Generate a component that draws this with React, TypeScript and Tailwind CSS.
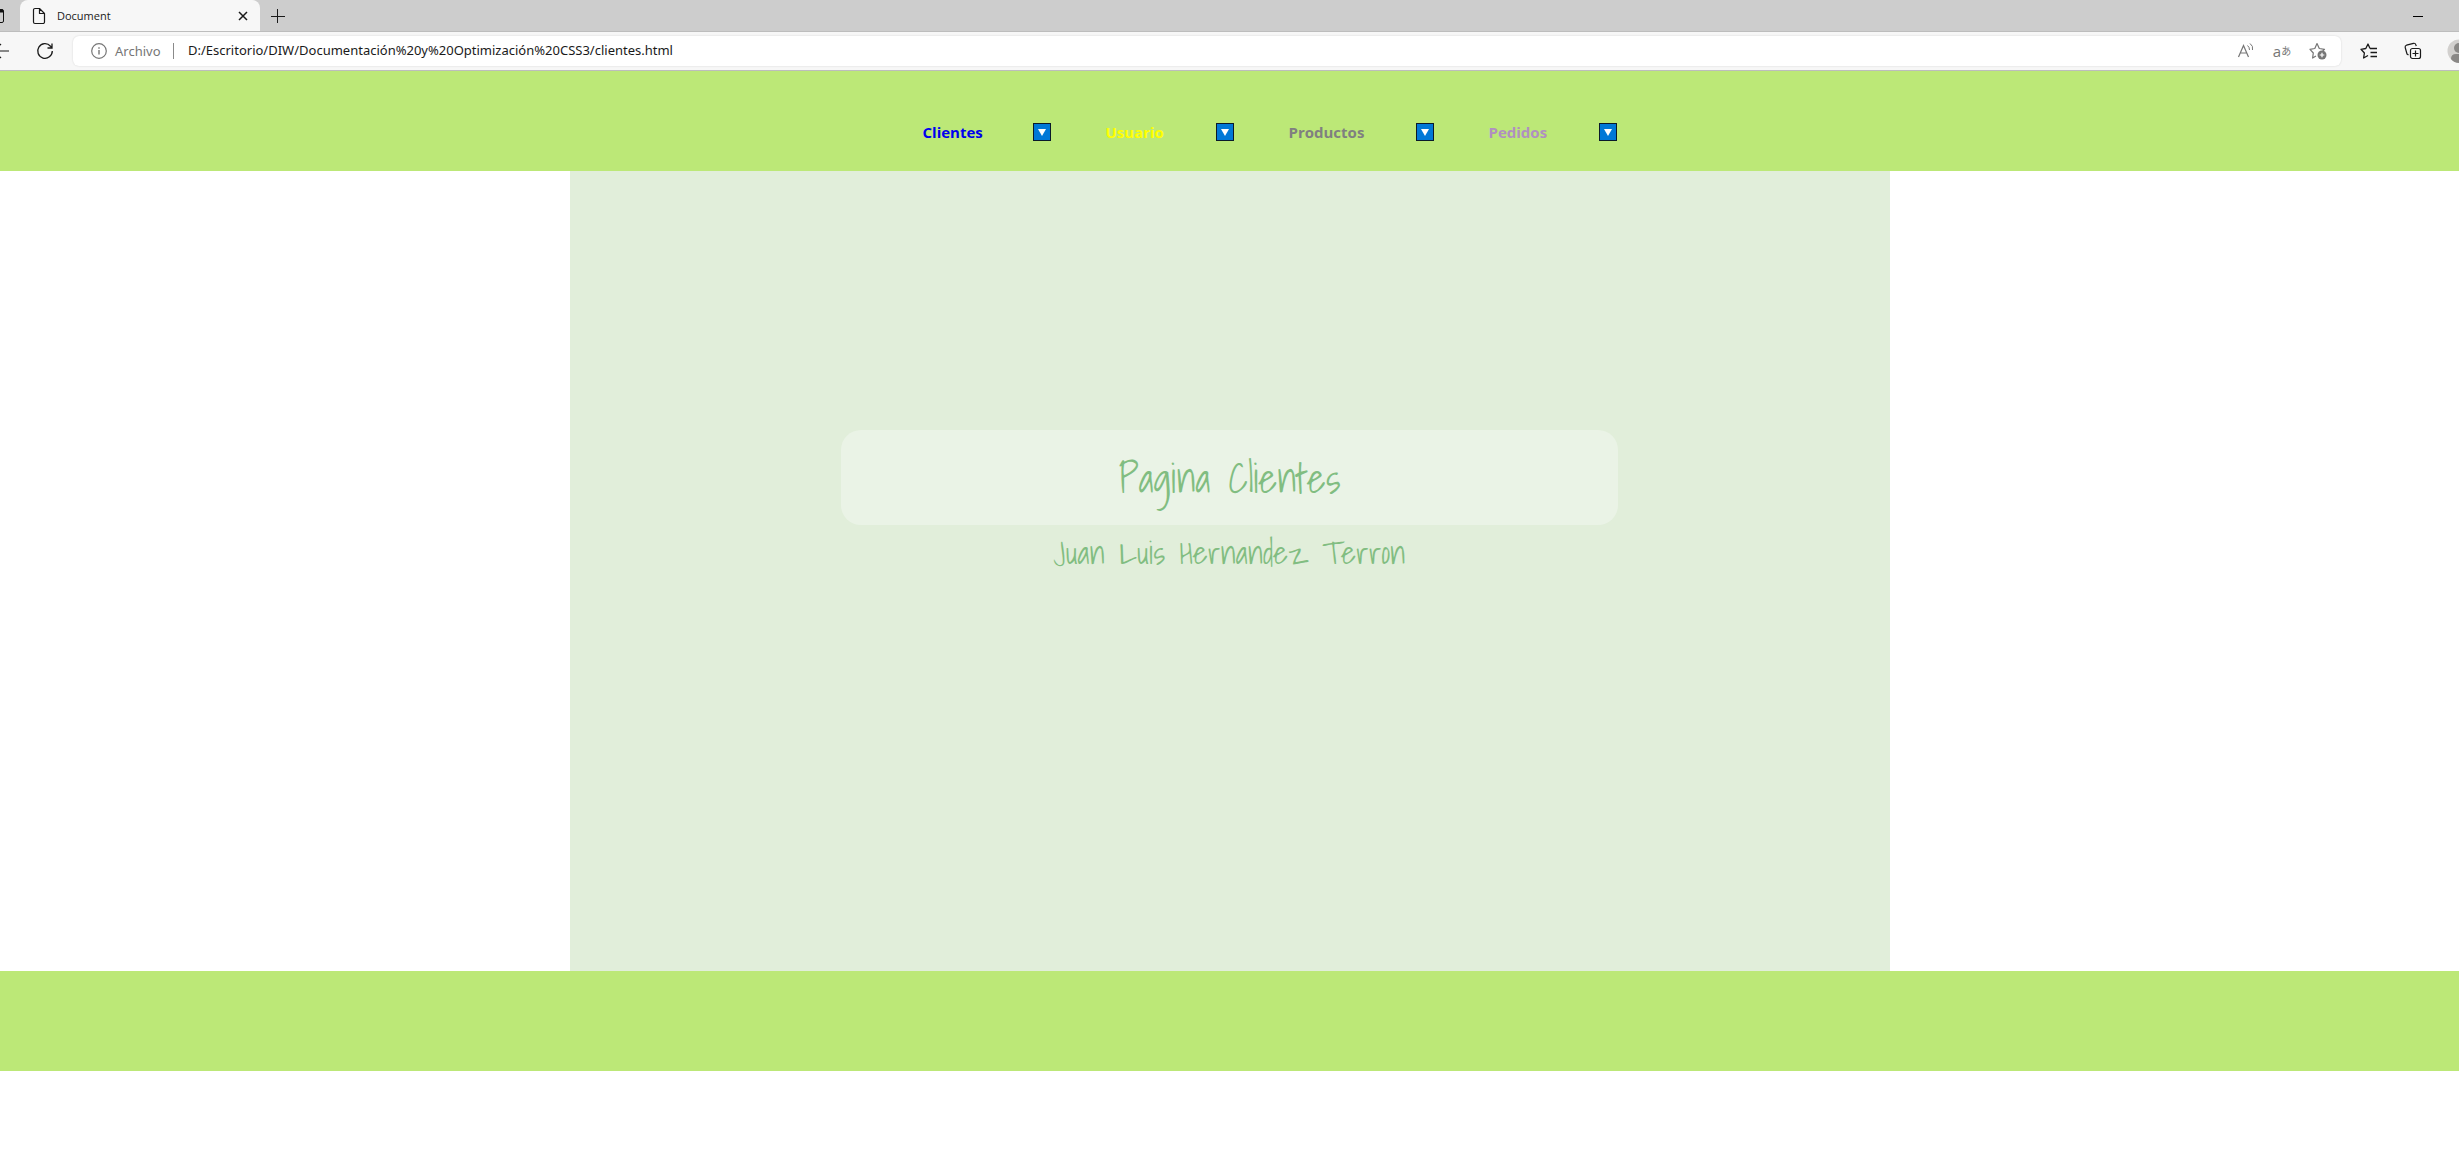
import React from "react";

const navItems = [
  { label: "Clientes", style: "w-[110px] text-[#0000ee]" },
  { label: "Usuario", style: "w-[110px] text-[#ffff00]" },
  { label: "Productos", style: "w-[127px] text-[#808080]" },
  { label: "Pedidos", style: "w-[110px] text-[#b090c0]" },
];

function TabStrip() {
  return (
    <div className="flex h-8 items-stretch overflow-hidden border-b border-[#bdbdbd] bg-[#cdcdcd]">
      <button aria-label="Acciones de pestañas" className="w-5 shrink-0">
        <svg width="20" height="31" viewBox="0 0 20 31" fill="none" stroke="#111">
          <path d="M-8 9.500h10a1.500 1.500 0 0 1 1.500 1.500v10a1.500 1.500 0 0 1-1.500 1.500h-10" />
          <path d="M-8 11H3" strokeWidth="3" />
        </svg>
      </button>
      <div className="-mb-px flex w-60 shrink-0 items-center rounded-t-lg bg-[#f7f7f7] px-3">
        <svg width="14" height="18" viewBox="0 0 14 18" fill="none" stroke="#1a1a1a" strokeWidth="1.200" strokeLinejoin="round">
          <path d="M3 1.500h4.500l5 5v8.500a1.500 1.500 0 0 1-1.500 1.500H3A1.500 1.500 0 0 1 1.500 15V3A1.500 1.500 0 0 1 3 1.500zM7.500 1.500v5h5" />
        </svg>
        <span className="ml-[11px] flex-1 text-[11px]">Document</span>
        <button aria-label="Cerrar pestaña" className="flex w-[10px] items-center justify-center">
          <svg width="10" height="10" viewBox="0 0 10 10" stroke="#1a1a1a" strokeWidth="1.500">
            <path d="M1 1l8 8M9 1l-8 8" />
          </svg>
        </button>
      </div>
      <button aria-label="Nueva pestaña" className="ml-2 flex w-5 items-center justify-center">
        <svg width="14" height="14" viewBox="0 0 14 14" stroke="#1a1a1a" strokeWidth="1">
          <path d="M0 7.500h14M6.500 0v14" />
        </svg>
      </button>
      <button aria-label="Minimizar" className="mr-9 ml-auto flex items-center">
        <svg width="10" height="10" viewBox="0 0 10 10" stroke="#000">
          <path d="M0 5.500h10" />
        </svg>
      </button>
    </div>
  );
}

function Toolbar() {
  return (
    <div className="flex h-[39px] items-center overflow-hidden border-b border-[#bdbdbd] bg-[#f7f7f7]">
      <button aria-label="Atrás" className="w-9 shrink-0">
        <svg width="12" height="18" viewBox="0 0 12 18" fill="none" stroke="#1a1a1a" strokeWidth="1.200">
          <path d="M-6 9H9M-6 9l7 -7M-6 9l7 7" />
        </svg>
      </button>
      <button aria-label="Actualizar" className="shrink-0">
        <svg width="18" height="18" viewBox="0 0 18 18" fill="none" stroke="#1a1a1a" strokeWidth="1.300">
          <path d="M16.300 9A7.300 7.300 0 1 1 14.500 4.200L16 6M16 1.500V6h-4.500" />
        </svg>
      </button>
      <div className="ml-[19px] flex h-[30px] flex-1 items-center rounded-md bg-white pr-[14px] pl-[18px] shadow-[0_0_2px_rgba(0,0,0,0.15)]">
        <svg width="16" height="16" viewBox="0 0 16 16" fill="none" stroke="#767676" strokeWidth="1.200">
          <circle cx="8" cy="8" r="7.300" />
          <path d="M8 7v4.500M8 4.300v1.400" strokeWidth="1.400" />
        </svg>
        <label htmlFor="url" className="ml-2 w-[59px] border-r border-[#8a8a8a] font-['Noto_Sans'] text-[13px] leading-4 text-[#767676]">
          Archivo
        </label>
        <input
          id="url"
          className="ml-3.5 min-w-0 flex-1 bg-transparent font-['Noto_Sans'] text-[13px] text-[#1a1a1a] outline-none"
          defaultValue="D:/Escritorio/DIW/Documentación%20y%20Optimización%20CSS3/clientes.html"
        />
        <div className="flex items-center gap-[18px] text-[#767676]">
          <button aria-label="Leer en voz alta">
            <svg width="18" height="18" viewBox="0 0 18 18" fill="none" stroke="currentColor" strokeWidth="1.200">
              <path d="M1.500 15L6.500 3.500l5 11.500M3.300 11h6.500" />
              <path d="M10.500 3.500q2 1.500 2 4.500M13 1.500q3.500 2.500 2.500 6.500" strokeWidth="1" />
            </svg>
          </button>
          <button aria-label="Traducir" className="flex h-5 w-[18px] items-center justify-center text-[15px] leading-5 whitespace-nowrap">
            a<span className="text-[10px]">あ</span>
          </button>
          <button aria-label="Agregar a favoritos">
            <svg width="18" height="18" viewBox="0 0 18 18" fill="none" stroke="currentColor" strokeWidth="1.200" strokeLinejoin="round">
              <path d="M7 14L3.600 16l.7-5L1 7.300l4.800-.8L8 1.500l2.300 5 5.200.8-1.800 1.700" />
              <circle cx="13" cy="13" r="4.500" fill="currentColor" stroke="none" />
              <path d="M13 10.700v4.600M10.700 13h4.600" stroke="#fff" />
            </svg>
          </button>
        </div>
      </div>
      <div className="ml-[19px] flex shrink-0 items-center">
        <button aria-label="Favoritos">
          <svg width="18" height="18" viewBox="0 0 18 18" fill="none" stroke="#1a1a1a" strokeWidth="1.300" strokeLinejoin="round">
            <path d="M8 13.500L3.600 16l.8-5L1 7.300l4.800-.8L8 2l2 4.500M10 6.500h7M10.500 10.500H17M10.500 14.500H17" />
          </svg>
        </button>
        <button aria-label="Colecciones" className="ml-[26px]">
          <svg width="18" height="18" viewBox="0 0 18 18" fill="none" stroke="#1a1a1a" strokeWidth="1.200" strokeLinejoin="round">
            <rect x="6.500" y="6.500" width="10" height="10" rx="2" />
            <path d="M11.500 8.500v6M8.500 11.500h6M4.500 13L3 12 1.200 5.500a2 2 0 0 1 1.300-2.300l7-1.900a2 2 0 0 1 2.300 1.400L12.300 4" />
          </svg>
        </button>
        <button aria-label="Perfil" className="ml-[25px] w-3 overflow-hidden">
          <svg width="12" height="24" viewBox="0 0 12 24">
            <circle cx="12" cy="12" r="11.500" fill="#d2d0ce" />
            <circle cx="12" cy="9" r="5" fill="#8a8886" />
            <path d="M4 20q0-5 5-5h3v9q-5 0-8-4z" fill="#8a8886" />
          </svg>
        </button>
      </div>
    </div>
  );
}

export default function App() {
  return (
    <div className="min-h-screen bg-white font-['Segoe_UI','Open_Sans','Noto_Sans_CJK_JP',sans-serif] text-[#1a1a1a]">
      <TabStrip />
      <Toolbar />
      <header className="flex h-[100px] justify-center bg-[#bce877] pt-[52px] pl-20">
        <nav>
          <ul className="flex gap-[55px]">
            {navItems.map(({ label, style }) => (
              <li key={label} className="flex h-[18px] items-center">
                <a href="#" className={`text-[15px] leading-5 font-bold ${style}`}>
                  {label}
                </a>
                <button aria-label={`Abrir ${label}`}>
                  <svg width="18" height="18" viewBox="0 0 18 18">
                    <rect x="0.500" y="0.500" width="17" height="17" fill="#0078d7" stroke="#0a1a2a" />
                    <path d="M5 6h8l-4 7z" fill="#fff" />
                  </svg>
                </button>
              </li>
            ))}
          </ul>
        </nav>
      </header>
      <main className="mx-auto flex h-[800px] max-w-[1320px] flex-col items-center bg-[#e1eeda] pt-[259px] font-['Shadows_Into_Light','Liberation_Sans_Narrow',sans-serif] text-[#81bd81]">
        <h1 className="flex h-[95px] w-full max-w-[777px] items-center justify-center rounded-[20px] bg-[#eaf3e6] text-[40px]">
          Pagina Clientes
        </h1>
        <p className="mt-1 text-[32px] leading-[46px]">Juan Luis Hernandez Terron</p>
      </main>
      <footer className="h-[100px] bg-[#bce877]" />
    </div>
  );
}
